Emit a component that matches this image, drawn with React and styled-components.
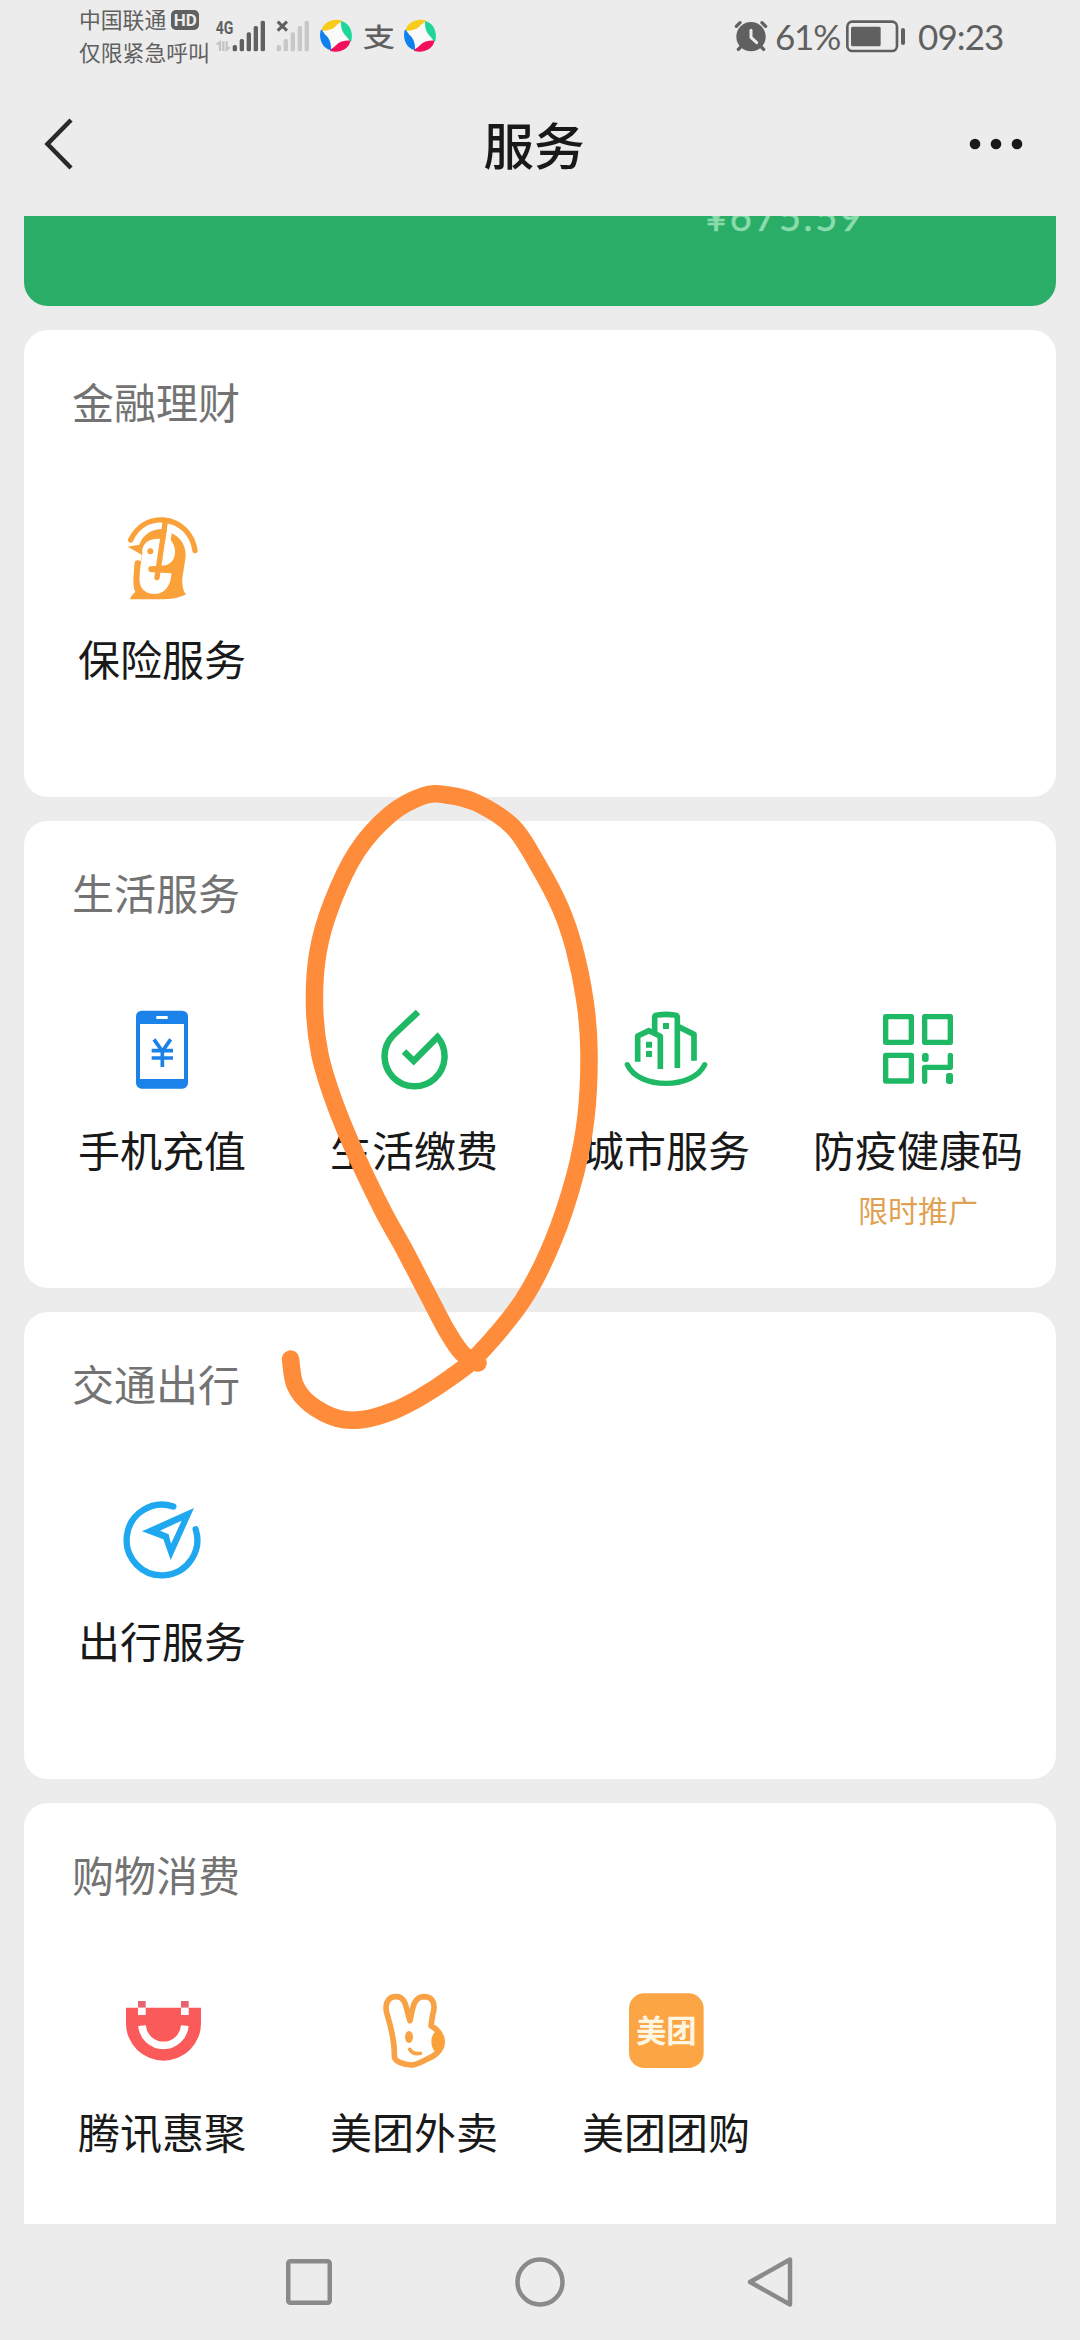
import React from 'react';
import styled, { createGlobalStyle } from 'styled-components';

const GlobalStyle = createGlobalStyle`
  * { box-sizing: border-box; }
  body { margin: 0; background: #ececec; }
`;

const cjk = `"Noto Sans CJK SC", "Noto Sans", sans-serif`;
const latin = `Lato, "Noto Sans CJK SC", sans-serif`;

const Page = styled.div`
  position: relative;
  display: flex;
  flex-direction: column;
  width: 1080px;
  height: 2340px;
  overflow: hidden;
  background: #ececec;
  color: #191919;
  font-family: ${cjk};
`;

const StatusBar = styled.div`
  display: flex;
  justify-content: space-between;
  height: 72px;
  padding: 0 77px 0 79px;
  color: #606060;
`;

const StatusGroup = styled.div`
  display: flex;
  align-items: center;
  height: 72px;
`;

const Carrier = styled.div`
  width: 132px;
  margin-top: -2px;
  font-size: 21.8px;
  line-height: 33px;
  white-space: nowrap;
`;

const CarrierLine = styled.div`
  display: flex;
  align-items: center;
  height: 33px;
`;

const HdBadge = styled.span`
  display: flex;
  align-items: center;
  justify-content: center;
  width: 28px;
  height: 20px;
  margin-top: 2px;
  margin-left: 5px;
  border-radius: 5px;
  background: #606060;
  color: #ececec;
  font: 700 17px/20px Roboto, sans-serif;
`;

const StatusIcon = styled.svg`
  display: block;
  flex: none;
  width: ${(p) => p.$w}px;
  height: 72px;
  margin-left: ${(p) => p.$gap || 0}px;
`;

const PayMark = styled.span`
  width: 32px;
  margin: 0 6px 0 9px;
  font-size: 26px;
  font-weight: 500;
  line-height: 70px;
  text-align: center;
  transform: scaleX(1.25);
`;

const StatusText = styled.span`
  width: ${(p) => p.$w}px;
  margin-left: ${(p) => p.$gap}px;
  font-family: ${latin};
  font-size: 35px;
  letter-spacing: ${(p) => p.$track}px;
  line-height: 72px;
  white-space: nowrap;
`;

const Header = styled.header`
  display: flex;
  align-items: center;
  justify-content: space-between;
  height: 144px;
  padding: 0 56px 0 40px;
`;

const HeaderIcon = styled.svg`
  display: block;
  width: 56px;
  height: 60px;
`;

const HeaderTitle = styled.h1`
  margin: -2px 0 0 4px;
  font-size: 50.5px;
  font-weight: 500;
  line-height: 60px;
`;

const Content = styled.main`
  display: flex;
  flex: 1;
  flex-direction: column;
  gap: 24px;
  min-height: 0;
  padding: 0 24px;
  overflow: hidden;
`;

const Wallet = styled.section`
  flex: none;
  height: 90px;
  padding-left: 681px;
  overflow: hidden;
  border-radius: 0 0 24px 24px;
  background: #2aae67;
`;

const Balance = styled.div`
  margin-top: -20px;
  color: #8bdcad;
  font-family: ${latin};
  font-size: 38px;
  letter-spacing: 2.6px;
  line-height: 40px;
  -webkit-text-stroke: 0.5px #8bdcad;
`;

const Card = styled.section`
  flex: none;
  height: 467px;
  padding: 41px 12px 0;
  border-radius: 24px;
  background: #fff;
`;

const CardTitle = styled.h2`
  margin: 0 0 87px;
  padding-left: 36px;
  color: #737373;
  font-size: 42px;
  font-weight: 400;
  line-height: 60px;
`;

const ServiceGrid = styled.div`
  display: grid;
  grid-template-columns: repeat(4, 252px);
`;

const Service = styled.div`
  display: flex;
  flex-direction: column;
  align-items: center;
`;

const ServiceIcon = styled.svg`
  display: block;
  width: 80px;
  height: 80px;
  overflow: visible;
`;

const ServiceLabel = styled.div`
  margin-top: 30px;
  font-size: 42px;
  line-height: 60px;
  white-space: nowrap;
`;

const ServiceNote = styled.div`
  margin-top: 10px;
  color: #e0a252;
  font-size: 30px;
  line-height: 40px;
`;

const NavBar = styled.nav`
  display: flex;
  flex: none;
  align-items: center;
  justify-content: center;
  gap: 171px;
  height: 116px;
  background: #ececec;
`;

const NavIcon = styled.svg`
  display: block;
  width: 60px;
  height: 60px;
  fill: none;
  stroke: #8a8a8a;
  stroke-width: 4.5;
  stroke-linejoin: round;
`;

const InkLayer = styled.svg`
  position: absolute;
  top: 0;
  left: 0;
  width: 1080px;
  height: 2340px;
  pointer-events: none;
`;

const bars = [
  [0, 135],
  [21, 117],
  [42, 97],
  [63, 78],
  [84, 62],
];

function Bars({ x, color }) {
  return bars.map(([dx, top]) => (
    <rect key={dx} x={x + dx} y={top} width="13" height={154 - top} rx="5" fill={color} />
  ));
}

function PrimarySignal() {
  return (
    <StatusIcon $w={56} $gap={1} viewBox="456 0 168 216">
      <text x="467" y="103" fill="#606060" fontFamily="Roboto, sans-serif" fontWeight="700" fontSize="56" textLength="53" lengthAdjust="spacingAndGlyphs">4G</text>
      <path d="M470 134 L480 127 V153 M490 124 V153 M500 124 V149 L509 141" stroke="#c4c4c4" strokeWidth="7" fill="none" />
      <Bars x={518} color="#606060" />
    </StatusIcon>
  );
}

function SecondarySignal() {
  return (
    <StatusIcon $w={44} viewBox="624 0 132 216">
      <path d="M653 65 L681 92 M681 65 L653 92" stroke="#606060" strokeWidth="9" />
      <Bars x={650} color="#c8c8c8" />
    </StatusIcon>
  );
}

const blades = ['#f8cc1c', '#1fd698', '#f0115a', '#1080f0'];

function SwirlLogo({ gap }) {
  return (
    <StatusIcon $w={36} $gap={gap} viewBox="-54 -107 108 216">
      <circle r="46" fill="#fafafa" />
      {blades.map((color, i) => (
        <path
          key={color}
          transform={`rotate(${i * 90})`}
          fill={color}
          d="M-43 -15 C-41 -36 -15 -54 17 -46 C21 -42 8 -38 0 -29 C-10 -18 -27 -14 -43 -15Z"
        />
      ))}
    </StatusIcon>
  );
}

function AlarmIcon() {
  return (
    <StatusIcon $w={34} viewBox="102 0 102 216">
      <circle cx="153" cy="110" r="44" fill="#606060" />
      <path d="M109 79 L120 68 M186 68 L197 79 M115 148 L124 139 M191 148 L182 139" stroke="#606060" strokeWidth="10" strokeLinecap="round" />
      <path d="M153 91 V112 L170 128" fill="none" stroke="#ececec" strokeWidth="9" strokeLinecap="round" strokeLinejoin="round" />
    </StatusIcon>
  );
}

function BatteryIcon() {
  return (
    <StatusIcon $w={60} $gap={7} viewBox="441 0 180 216">
      <rect x="445" y="65" width="149" height="88" rx="15" fill="none" stroke="#606060" strokeWidth="8" />
      <rect x="456" y="80" width="89" height="59" rx="5" fill="#606060" />
      <rect x="606" y="84" width="12" height="51" rx="6" fill="#606060" />
    </StatusIcon>
  );
}

function InsuranceIcon() {
  return (
    <ServiceIcon viewBox="186 84 240 240">
      <path fill="#fba13a" d="M203 170 L238 164 C250 132 276 116 312 117 L335 130 C362 142 378 166 377 200 L367 265 C366 290 370 304 378 313 C360 324 330 328 300 328 L210 328 C213 318 219 312 226 306 C216 285 222 250 224 216 Q232 208 240 216 L245 194Z" />
      <path fill="#fff" d="M247 190 C244 164 262 146 296 146 L330 148 C342 162 346 175 345 190 C343 210 332 222 315 226 L268 230 L268 246 L334 250 C334 280 318 312 285 312 C255 312 240 296 238 270 C238 240 244 215 247 190Z" />
      <path fill="#fff" d="M198 186 L246 198 L240 216 Q232 206 224 214 L212 212Z" />
      <path d="M331 102 L323 156" stroke="#fff" strokeWidth="16" />
      <g fill="none" stroke="#fba13a" strokeWidth="16" strokeLinecap="round">
        <path d="M212 150 C232 108 268 88 310 90 C360 94 398 130 405 182" />
        <path d="M316 94 L291 263" />
        <path d="M273 237 H345" />
        <path d="M233 219 C231 240 228 260 230 280" />
      </g>
      <circle cx="271" cy="184" r="9" fill="#fba13a" />
    </ServiceIcon>
  );
}

function PhoneIcon() {
  return (
    <ServiceIcon viewBox="186 87 240 240">
      <rect x="228" y="92" width="156" height="234" rx="17" fill="#1a82e8" />
      <rect x="240" y="132" width="132" height="165" fill="#fff" />
      <rect x="289" y="108" width="34" height="9" fill="#fff" />
      <g fill="none" stroke="#1a82e8" strokeWidth="11">
        <path d="M282 178 L307 214 L332 178" />
        <path d="M275 212 H339 M275 234 H339" />
        <path d="M307 210 V261" />
      </g>
    </ServiceIcon>
  );
}

function DropIcon() {
  return (
    <ServiceIcon viewBox="374 1009 80 80">
      <path
        d="M418 1012 L393 1035.500 A30 30 0 1 0 437.500 1037 L413.700 1061 L404 1051.500"
        fill="none"
        stroke="#1fb966"
        strokeWidth="6.5"
      />
    </ServiceIcon>
  );
}

function CityIcon() {
  return (
    <ServiceIcon viewBox="198 87 240 240">
      <g fill="none" stroke="#1fb966" strokeWidth="17" strokeLinejoin="round">
        <path d="M233 245 V168 L267 152 L301 169 V267" />
        <path d="M284 156 V112 Q284 106 292 105 Q318 101 344 105 Q352 106 352 112 V264" />
        <path d="M355 140 L402 163 V242" />
        <path d="M202 254 C235 329 400 329 434 254" strokeLinecap="round" strokeWidth="16" />
      </g>
      <path fill="#1fb966" d="M309 129h18v18h-18z M258 185h18v18h-18z M258 213h18v18h-18z" />
    </ServiceIcon>
  );
}

function CodeIcon() {
  return (
    <ServiceIcon viewBox="954 87 240 240">
      <g fill="none" stroke="#1fb966" strokeWidth="16" strokeLinejoin="round">
        <rect x="977" y="110" width="77" height="77" />
        <rect x="1094" y="110" width="77" height="77" />
        <rect x="977" y="226" width="77" height="77" />
        <path d="M1171 226 V262 H1094 V304" strokeLinecap="round" />
      </g>
      <rect x="1086" y="219" width="20" height="27" rx="8" fill="#1fb966" />
      <rect x="1158" y="279" width="21" height="33" rx="8" fill="#1fb966" />
    </ServiceIcon>
  );
}

function TravelIcon() {
  return (
    <ServiceIcon viewBox="186 90 240 240">
      <path d="M340 109.500 A106 106 0 1 0 407 178" fill="none" stroke="#1fa8f0" strokeWidth="19" strokeLinecap="round" />
      <path fill="#1fa8f0" fillRule="evenodd" d="M402 114 L246 184 L310 208 L332 270Z M365 152 L333 221 L326 193 L300 182Z" />
    </ServiceIcon>
  );
}

function BagIcon() {
  return (
    <ServiceIcon viewBox="186 93 240 240">
      <path fill="#fa5a5a" d="M198 143 H423 V190 A112.500 112 0 0 1 198 190Z" />
      <path fill="#e56470" d="M234 123h23v20h-23z M363 123h23v20h-23z" />
      <path fill="#fff" d="M234 143h23v22h-23z M363 143h23v22h-23z" />
      <path fill="none" stroke="#fff" strokeWidth="23" d="M246 197 A64.500 65 0 0 0 374.500 197" />
    </ServiceIcon>
  );
}

function RabbitIcon() {
  return (
    <ServiceIcon viewBox="942 93 240 240">
      <path
        fill="none"
        stroke="#f8a245"
        strokeWidth="17"
        strokeLinejoin="round"
        d="M1003 288 C1004 250 994 205 982 165 C973 138 980 111 1007 110 C1040 108 1038 150 1050 182 C1058 150 1058 111 1092 110 C1124 110 1126 140 1118 165 L1113 197 C1140 212 1147 230 1146 250 C1143 275 1120 290 1098 299 C1083 306 1070 315 1052 315 C1030 313 1003 305 1003 288Z"
      />
      <ellipse cx="1134" cy="245" rx="20" ry="33" fill="#fba13a" />
      <ellipse cx="1047" cy="231" rx="12" ry="18" fill="#f8a245" />
      <path d="M1049 268 Q1060 285 1081 280" fill="none" stroke="#f8a245" strokeWidth="11" strokeLinecap="round" />
    </ServiceIcon>
  );
}

function MeituanIcon() {
  return (
    <ServiceIcon viewBox="198 93 240 240">
      <rect x="207" y="100" width="224" height="224" rx="46" fill="#fba545" />
      <text x="319" y="246" textAnchor="middle" fill="#fff6e2" fontFamily='"Noto Sans CJK SC", sans-serif' fontWeight="700" fontSize="91">美团</text>
    </ServiceIcon>
  );
}

const sections = [
  { title: '金融理财', items: [{ label: '保险服务', Icon: InsuranceIcon }] },
  {
    title: '生活服务',
    items: [
      { label: '手机充值', Icon: PhoneIcon },
      { label: '生活缴费', Icon: DropIcon },
      { label: '城市服务', Icon: CityIcon },
      { label: '防疫健康码', Icon: CodeIcon, note: '限时推广' },
    ],
  },
  { title: '交通出行', items: [{ label: '出行服务', Icon: TravelIcon }] },
  {
    title: '购物消费',
    items: [
      { label: '腾讯惠聚', Icon: BagIcon },
      { label: '美团外卖', Icon: RabbitIcon },
      { label: '美团团购', Icon: MeituanIcon },
    ],
  },
];

const strokePoints = [
  [290.5, 1359], [295, 1385], [310, 1404], [338, 1418.5], [363, 1419.5], [393, 1411],
  [420, 1397.5], [450, 1378], [477, 1356], [523, 1300], [553, 1241], [575, 1175],
  [586, 1117], [589, 1052], [585, 1001], [574, 947.5], [560, 907], [538, 865],
  [513, 827], [477, 803], [447, 795], [423, 796], [390, 814.5], [357, 851.5],
  [332, 903], [318, 952], [314.5, 1005.5], [320, 1055], [335, 1104], [357, 1157],
  [383, 1211], [403, 1247], [427, 1293], [447, 1331], [462, 1353], [478, 1363],
];

// Catmull-Rom spline through the pen samples, written as cubic segments.
function smoothPath(pts) {
  let d = `M${pts[0][0]} ${pts[0][1]}`;
  for (let i = 0; i < pts.length - 1; i += 1) {
    const a = pts[i - 1] || pts[i];
    const b = pts[i];
    const c = pts[i + 1];
    const e = pts[i + 2] || c;
    d += ` C${b[0] + (c[0] - a[0]) / 6} ${b[1] + (c[1] - a[1]) / 6} ${c[0] - (e[0] - b[0]) / 6} ${c[1] - (e[1] - b[1]) / 6} ${c[0]} ${c[1]}`;
  }
  return d;
}

export default function App() {
  return (
    <Page>
      <GlobalStyle />
      <StatusBar>
        <StatusGroup>
          <Carrier>
            <CarrierLine>
              中国联通<HdBadge>HD</HdBadge>
            </CarrierLine>
            <CarrierLine>仅限紧急呼叫</CarrierLine>
          </Carrier>
          <PrimarySignal />
          <SecondarySignal />
          <SwirlLogo gap={6} />
          <PayMark>支</PayMark>
          <SwirlLogo gap={1} />
        </StatusGroup>
        <StatusGroup>
          <AlarmIcon />
          <StatusText $w={64} $gap={7} $track={-1.2}>61%</StatusText>
          <BatteryIcon />
          <StatusText $w={85} $gap={12} $track={-0.9}>09:23</StatusText>
        </StatusGroup>
      </StatusBar>
      <Header>
        <HeaderIcon viewBox="0 0 56 60">
          <path d="M31 6 L7.500 30 L31 54" fill="none" stroke="#2a2a2a" strokeWidth="4.5" />
        </HeaderIcon>
        <HeaderTitle>服务</HeaderTitle>
        <HeaderIcon viewBox="0 0 56 60">
          <circle cx="7" cy="30" r="5.300" fill="#191919" />
          <circle cx="28" cy="30" r="5.300" fill="#191919" />
          <circle cx="49" cy="30" r="5.300" fill="#191919" />
        </HeaderIcon>
      </Header>
      <Content>
        <Wallet>
          <Balance>¥675.59</Balance>
        </Wallet>
        {sections.map(({ title, items }) => (
          <Card key={title}>
            <CardTitle>{title}</CardTitle>
            <ServiceGrid>
              {items.map(({ label, Icon, note }) => (
                <Service key={label}>
                  <Icon />
                  <ServiceLabel>{label}</ServiceLabel>
                  {note && <ServiceNote>{note}</ServiceNote>}
                </Service>
              ))}
            </ServiceGrid>
          </Card>
        ))}
      </Content>
      <NavBar>
        <NavIcon viewBox="0 0 60 60">
          <rect x="9.250" y="9.250" width="41.500" height="41.500" rx="2" />
        </NavIcon>
        <NavIcon viewBox="0 0 60 60">
          <circle cx="30" cy="30" r="22.500" />
        </NavIcon>
        <NavIcon viewBox="0 0 60 60">
          <path d="M49 7.500 V52.500 L9 30Z" />
        </NavIcon>
      </NavBar>
      <InkLayer viewBox="0 0 1080 2340">
        <path d={smoothPath(strokePoints)} fill="none" stroke="#ff8c3a" strokeWidth="17.5" strokeLinecap="round" strokeLinejoin="round" />
      </InkLayer>
    </Page>
  );
}
